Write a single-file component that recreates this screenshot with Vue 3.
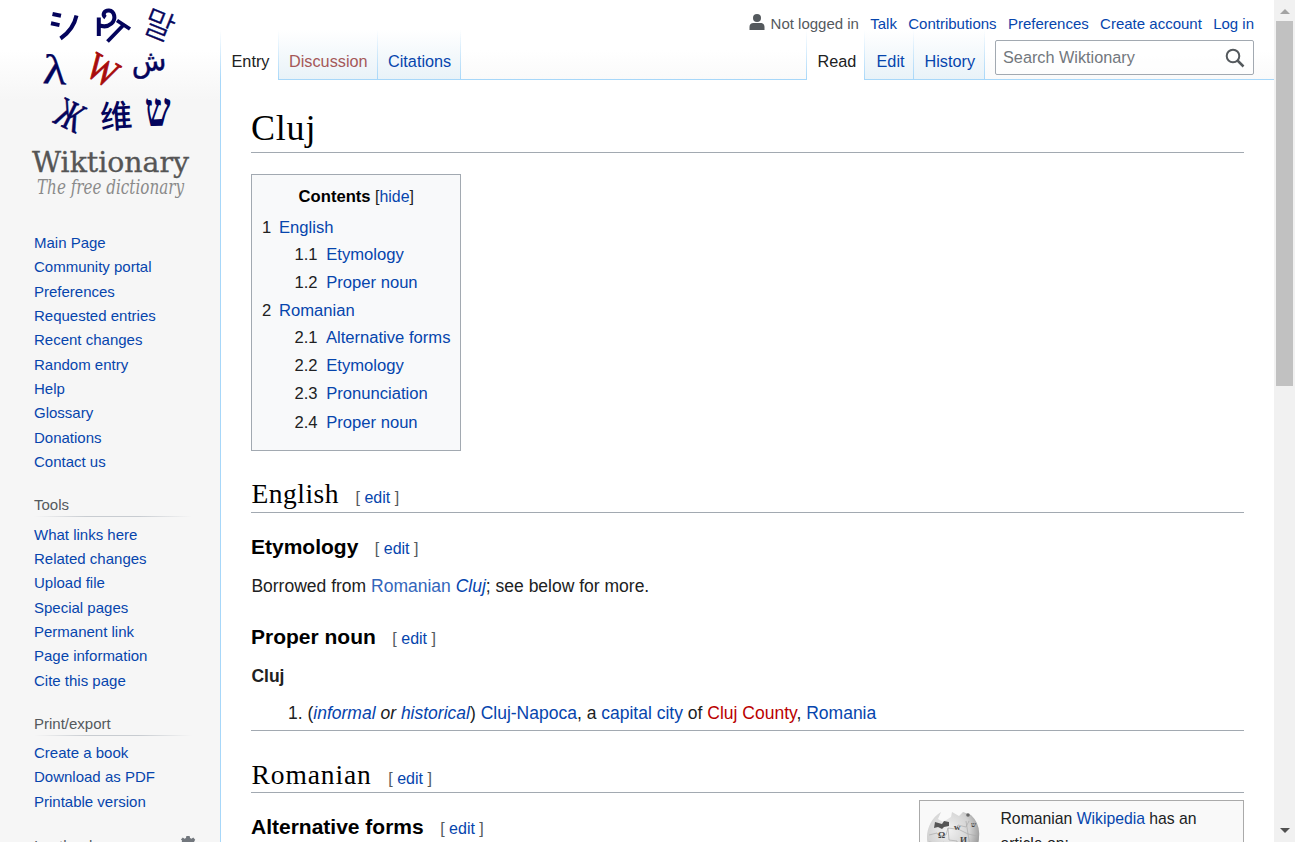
<script setup>
const personal = ['Talk', 'Contributions', 'Preferences', 'Create account', 'Log in']
const nav = ['Main Page', 'Community portal', 'Preferences', 'Requested entries', 'Recent changes', 'Random entry', 'Help', 'Glossary', 'Donations', 'Contact us']
const tools = ['What links here', 'Related changes', 'Upload file', 'Special pages', 'Permanent link', 'Page information', 'Cite this page']
const print = ['Create a book', 'Download as PDF', 'Printable version']
const toc = [
  { n: '1', t: 'English', h: 27 },
  { n: '1.1', t: 'Etymology', sub: true, h: 28 },
  { n: '1.2', t: 'Proper noun', sub: true, h: 28 },
  { n: '2', t: 'Romanian', h: 27 },
  { n: '2.1', t: 'Alternative forms', sub: true, h: 28 },
  { n: '2.2', t: 'Etymology', sub: true, h: 28 },
  { n: '2.3', t: 'Pronunciation', sub: true, h: 29 },
  { n: '2.4', t: 'Proper noun', sub: true, h: 28 },
]
</script>

<template>
  <div class="window">
    <aside class="sidebar">
      <svg class="logo" width="220" height="210" viewBox="0 0 220 210">
        <g fill="#04045c" text-anchor="middle">
          <g fill="none" stroke="#04045c" stroke-width="4">
            <path d="M52.500 14l8.500 1.800M51 23.300l8.500 1.800" />
            <path d="M76.500 15.500C74.500 25 70 32 60.500 38.500" />
          </g>
          <g fill="none" stroke="#04045c" stroke-width="4">
            <path d="M98.800 17.500v18.500M99 25c4 2 9 1.500 12.500-1.500 5-4.500 3-12.500-2.500-13-5-.3-7 4.500-3.500 7" />
            <path d="M107.500 41.500l15.500-16M117 20.500l13 8.500" stroke-width="3.800" />
          </g>
          <text class="cjk" font-size="33" transform="translate(159 25) rotate(22)" y="12" font-weight="300" stroke="#04045c" stroke-width=".5">말</text>
          <text class="serif" font-size="42" transform="translate(55 70) rotate(3) scale(1.180 1)" y="14" stroke="#04045c" stroke-width=".3">λ</text>
          <text class="serif" font-size="34" transform="translate(103 70) rotate(30) scale(.92 1.150)" y="11.500" fill="#a80c0c" stroke="#a80c0c" stroke-width=".8">W</text>
          <text class="sans" font-size="29" transform="translate(149 67) rotate(-5)" y="4" stroke="#04045c" stroke-width=".4">ش</text>
          <text class="serif" font-size="36" transform="translate(70 115) rotate(26) scale(.82 1.180)" y="12" stroke="#04045c" stroke-width=".5">Ж</text>
          <text class="cjk" font-size="32" transform="translate(116 116) rotate(-4)" y="12" font-weight="500">维</text>
          <text class="serif" font-size="43" transform="translate(158 112) rotate(-2) scale(.85 1.100)" y="12.500" font-weight="bold">ש</text>
        </g>
        <text class="mark" x="32" y="171.500" font-size="27.500" fill="#555" stroke="#555" stroke-width=".3" textLength="157" lengthAdjust="spacingAndGlyphs">Wiktionary</text>
        <text class="mark" x="37" y="193.500" font-size="19.500" fill="#8a8a8a" font-style="italic" textLength="147" lengthAdjust="spacingAndGlyphs">The free dictionary</text>
      </svg>
      <nav class="portal first">
        <a v-for="l in nav" :key="l">{{ l }}</a>
      </nav>
      <nav class="portal tools">
        <h3>Tools</h3>
        <a v-for="l in tools" :key="l">{{ l }}</a>
      </nav>
      <nav class="portal print">
        <h3>Print/export</h3>
        <a v-for="l in print" :key="l">{{ l }}</a>
      </nav>
      <div class="lang">
        <span>In other languages</span>
        <svg width="16" height="16" viewBox="0 0 20 20" fill="#72777d">
          <path d="M8 0h4l.6 2.600 1.700.7L16.600 2l2.400 2.800-1.300 2.200.6 1.600L20 9v3l-2.500.6-.7 1.700 1.200 2.300-2.300 2.300-2.300-1.300-1.700.7L11 20H8l-.6-2.500-1.700-.7-2.300 1.200-2.300-2.300 1.300-2.300-.7-1.700L0 11V8l2-.3.700-1.700L1.200 4.500 3.500 2l2.200 1.300L7.400 2.600z" />
          <circle cx="10" cy="10.500" r="2.800" fill="#f6f6f6" />
        </svg>
      </div>
    </aside>

    <div class="column">
      <header class="head">
        <div class="personal">
          <svg class="user" width="16" height="16" viewBox="0 0 16 16" fill="#54595d">
            <circle cx="8" cy="4" r="4" />
            <path d="M.5 16v-3c0-2.500 1.500-4 4-4h7c2.500 0 4 1.500 4 4v3z" />
          </svg>
          <span class="anon">Not logged in</span>
          <a v-for="l in personal" :key="l">{{ l }}</a>
        </div>
        <div class="bar">
          <div class="tabs left">
            <a class="tab on entry">Entry</a>
            <a class="tab new discussion">Discussion</a>
            <a class="tab citations">Citations</a>
          </div>
          <div class="gap"></div>
          <div class="tabs">
            <a class="tab on read">Read</a>
            <a class="tab edit-tab">Edit</a>
            <a class="tab history">History</a>
          </div>
          <div class="searchwrap">
            <div class="search">
              <span>Search Wiktionary</span>
              <svg width="20" height="20" viewBox="0 0 20 20" fill="none" stroke="#54595d">
                <circle cx="8" cy="8" r="6.300" stroke-width="2" />
                <path d="M12.500 12.500l6 6" stroke-width="2.500" />
              </svg>
            </div>
          </div>
        </div>
      </header>

      <main class="content">
        <h1><span>Cluj</span></h1>
        <div class="toc">
          <div class="toctitle"><b>Contents</b> [<a>hide</a>]</div>
          <div v-for="i in toc" :key="i.n" class="row" :class="{ sub: i.sub }" :style="{ height: i.h + 'px' }">
            <span class="num">{{ i.n }}</span><a>{{ i.t }}</a>
          </div>
        </div>
        <h2 class="english"><span class="title">English</span><span class="edit">[ <a>edit</a> ]</span></h2>
        <h3 class="ety"><span>Etymology</span><span class="edit">[ <a>edit</a> ]</span></h3>
        <p class="borrowed">Borrowed from <a class="ext">Romanian</a> <i><a>Cluj</a></i>; see below for more.</p>
        <h3 class="proper"><span>Proper noun</span><span class="edit">[ <a>edit</a> ]</span></h3>
        <p class="headword"><b>Cluj</b></p>
        <p class="def"><span class="n">1.</span>(<i><a>informal</a> or <a>historical</a></i>) <a>Cluj-Napoca</a>, a <a>capital city</a> of <a class="red">Cluj County</a>, <a>Romania</a></p>
        <h2 class="romanian"><span class="title">Romanian</span><span class="edit">[ <a>edit</a> ]</span></h2>
        <div class="last">
          <h3><span>Alternative forms</span><span class="edit">[ <a>edit</a> ]</span></h3>
          <div class="sister">
            <svg width="54" height="54" viewBox="0 0 54 54">
              <defs>
                <radialGradient id="globe" cx=".4" cy=".35" r=".7">
                  <stop offset="0" stop-color="#f2f2f2" /><stop offset=".6" stop-color="#d2d2d2" /><stop offset="1" stop-color="#888" />
                </radialGradient>
              </defs>
              <path d="M15 1l-3 7 5 3 8-5 1-5 7 4 4-4 8 3a26 26 0 018 22 26 26 0 01-52 0C1 17 6 6 15 1z" fill="url(#globe)" />
              <path d="M9 11l7 2 2-3 5 1v4l-5 1-2 2-4-2-4 1z" fill="#555" />
              <path d="M3 24l8-2 2 3 7-1 2-7 8 1 2-4 8 2 3-6M22 17l1 12 8 1 1 10M32 18l10 5 2 12M3 31l12 2 3-2M40 10l2 13 9 2" fill="none" stroke="#aaa" stroke-width=".7" />
              <g fill="#444" font-size="9" class="serif" font-weight="bold">
                <text x="12" y="27">Ω</text><text x="28" y="19">w</text><text x="34" y="32">И</text><text x="45" y="16" font-size="7">ש</text>
              </g>
              <circle cx="42" cy="4" r="1.800" fill="#666" />
            </svg>
            <div class="sister-text">Romanian <a>Wikipedia</a> has an article on:</div>
          </div>
        </div>
      </main>
    </div>

    <div class="scroll">
      <i class="up"></i>
      <div class="thumb"></div>
      <i class="down"></i>
    </div>
  </div>
</template>

<style>
html, body { margin: 0; overflow: hidden; }
</style>

<style scoped>
* { box-sizing: border-box; }
.window { display: flex; width: 1295px; height: 842px; overflow: hidden; font-family: "Liberation Sans", Arial, sans-serif; color: #202122; background: linear-gradient(#fff 50px, #f6f6f6 100px); }
a { color: #0645ad; }
.serif { font-family: "Liberation Serif", serif; }
.mark { font-family: "DejaVu Serif Condensed", "DejaVu Serif", serif; }
.sans { font-family: "DejaVu Sans", sans-serif; }
.cjk { font-family: "Noto Sans CJK KR", "Noto Sans CJK SC", sans-serif; }
.sidebar { width: 220px; flex: none; }
.logo { display: block; height: 210px; }
.portal { display: flex; flex-direction: column; padding-left: 34px; margin-bottom: 19px; font-size: 15px; line-height: 24.350px; }
.portal.first { padding-top: 21px; margin-bottom: 18px; }
.portal.tools { margin-bottom: 17.700px; line-height: 24.300px; }
.portal.print { margin-bottom: 19px; }
.portal h3 { margin: 0 28px 5.500px 0; height: 25px; font-size: 15px; font-weight: 400; line-height: 25px; color: #54595d; background: linear-gradient(to right, rgba(200,204,209,0), #c8ccd1 33%, #c8ccd1 66%, rgba(200,204,209,0)) no-repeat bottom / 100% 1px; }
.portal.tools h3 { margin-bottom: 5.400px; }
.lang { display: flex; justify-content: space-between; padding: 0 24px 0 34px; font-size: 15px; line-height: 26px; color: #54595d; }
.lang span { white-space: nowrap; }
.lang svg { margin-top: 3px; }
.column { width: 1054px; flex: none; display: flex; flex-direction: column; }
.head { height: 80px; flex: none; }
.personal { position: relative; z-index: 1; height: 30px; display: flex; justify-content: flex-end; padding: 12px 20px 0 0; font-size: 15px; line-height: 24px; white-space: nowrap; }
.personal a { margin-left: 11.300px; }
.user { margin: 2px 6px 0 0; }
.anon { color: #54595d; }
.bar { display: flex; height: 50px; }
.tabs { display: flex; }
.gap { flex: 1; border-bottom: 1px solid #a7d7f9; }
.tab { height: 50px; padding: 20px 0 0 10px; font-size: 16.250px; line-height: 23px; white-space: nowrap; background: linear-gradient(transparent, #a7d7f9) no-repeat right / 1px 100%, linear-gradient(#a7d7f9, #a7d7f9) no-repeat bottom / 100% 1px, linear-gradient(#fff, #e8f2f8); }
.tab.on { color: #202122; background: linear-gradient(rgba(167,215,249,0), #a7d7f9) no-repeat left / 1px 100%, linear-gradient(rgba(167,215,249,0), #a7d7f9) no-repeat right / 1px 100%, #fff; }
.tab.new { color: #a55858; }
.entry { width: 59px; padding-left: 11.500px; }
.discussion { width: 99px; }
.citations { width: 83px; }
.read { width: 59px; padding-left: 11.500px; }
.edit-tab { width: 49px; padding-left: 11.500px; }
.history { width: 71px; padding-left: 10.500px; }
.searchwrap { width: 289px; padding: 10px 20px 0 10px; border-bottom: 1px solid #a7d7f9; }
.search { display: flex; justify-content: space-between; width: 259px; height: 35px; border: 1px solid #a2a9b1; border-radius: 2px; background: rgba(255,255,255,.5); padding: 0 8px 0 7px; font-size: 16.250px; line-height: 33px; color: #72777d; }
.search svg { margin-top: 7px; }
.content { flex: 1; background: #fff; border-left: 1px solid #a7d7f9; padding: 23px 30px 0; font-size: 17.500px; line-height: 28px; }
h1, h2, h3, p { margin: 0; }
h1 { height: 50px; border-bottom: 1px solid #a2a9b1; font: 400 36px/50px "Liberation Serif", serif; color: #000; letter-spacing: .8px; }
.toc { width: 210px; height: 277px; margin-top: 21px; padding: 9px 9.500px 0 10px; border: 1px solid #a2a9b1; background: #f8f9fa; font-size: 16.625px; line-height: 26.600px; white-space: nowrap; }
.toctitle { text-align: center; height: 31px; font-size: 15.900px; }
.toctitle b { color: #000; font-size: 16.625px; }
.row { display: flex; }
.row .num { width: 17px; }
.row.sub { padding-left: 32.400px; }
.row.sub .num { width: 31.800px; }
h2 { display: flex; align-items: baseline; border-bottom: 1px solid #a2a9b1; color: #000; font-weight: 400; padding-left: .5px; }
h2 .title { font: 400 27.500px/36px "Liberation Serif", serif; letter-spacing: .5px; }
.english { height: 37px; margin-top: 25px; }
.edit { margin-left: 16.500px; font-size: 16px; font-weight: 400; line-height: 28px; color: #54595d; }
h3 { display: flex; align-items: baseline; font-size: 21px; line-height: 34px; color: #000; }
.ety { margin-top: 17px; height: 34px; }
.borrowed { margin-top: 8px; padding-left: .4px; }
.ext { color: #3366bb; }
.proper { margin-top: 20px; height: 34px; }
.headword { margin-top: 8px; padding-left: .4px; }
.def { margin-top: 9px; height: 32px; border-bottom: 1px solid #a2a9b1; white-space: nowrap; }
.def .n { display: inline-block; width: 56.500px; padding-left: 37px; }
.red { color: #ba0000; }
.romanian { height: 37px; margin-top: 25px; padding-top: 1px; }
.romanian .title { letter-spacing: .9px; }
.last { display: flex; justify-content: space-between; height: 49px; overflow: hidden; }
.last h3 { margin-top: 17px; height: 34px; }
.sister { display: flex; width: 325px; height: 80px; margin-top: 7px; border: 1px solid #aaa; background: #f9f9f9; padding: 8px 6px; font-size: 15.750px; line-height: 25px; }
.sister svg { flex: none; margin-top: 2px; }
.sister-text { width: 220px; margin-left: 20.500px; margin-top: -3px; }
.scroll { width: 21px; display: flex; flex-direction: column; align-items: center; background: #f1f1f1; }
.thumb { width: 17px; height: 365px; background: #c1c1c1; margin-top: 7px; }
.up, .down { width: 0; height: 0; border: 5px solid transparent; }
.up { margin-top: 4px; border-bottom-color: #a3a3a3; }
.down { border-top-color: #505050; margin-top: auto; margin-bottom: 4px; }
</style>
